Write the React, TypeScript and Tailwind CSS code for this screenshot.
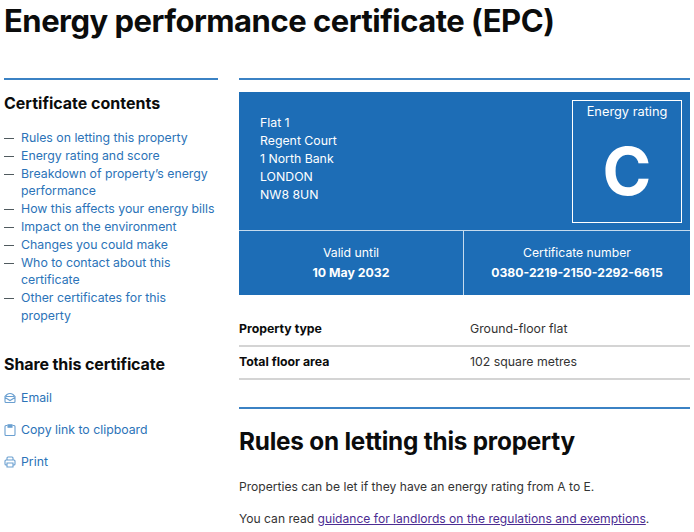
import React from "react";

const F = { fontFamily: 'Inter, sans-serif' };
const items = [
  ["Rules on letting this property"],
  ["Energy rating and score"],
  ["Breakdown of property’s energy", "performance"],
  ["How this affects your energy bills"],
  ["Impact on the environment"],
  ["Changes you could make"],
  ["Who to contact about this", "certificate"],
  ["Other certificates for this", "property"],
];

function Row({ k, v }: { k: string; v: string }) {
  return (
    <div className="flex h-[33px] items-center border-b-2 border-[#d4d4d4] text-[12.300px] text-[#0b0c0c]">
      <div className="w-[231px] font-bold">{k}</div>
      <div className="text-[#333]">{v}</div>
    </div>
  );
}

export default function App() {
  return (
    <div className="h-[532px] w-[694px] overflow-hidden bg-white" style={F}>
      <h1 className="pl-[4px] pt-[1px] text-[31px] font-bold leading-[40px] tracking-[-0.500px] text-[#0b0c0c]">
        Energy performance certificate (EPC)
      </h1>
      <div className="mt-[37px] flex">
        <aside className="ml-[4px] w-[214px]">
          <div className="h-[2px] bg-[#3b82c4]" />
          <h2 className="mt-[12px] text-[16px] font-bold leading-[22px] text-[#0b0c0c]">Certificate contents</h2>
          <ul className="mt-[15px]">
            {items.map((lines) => (
              <li key={lines[0]} className="flex text-[12.300px] leading-[17.800px] text-[#2b73b8]">
                <span className="mr-[7px] mt-[9px] h-px w-[10px] shrink-0 bg-[#505a5f]" />
                <span>
                  {lines.map((l) => (
                    <div key={l}>{l}</div>
                  ))}
                </span>
              </li>
            ))}
          </ul>
          <h2 className="mt-[28px] text-[16px] font-bold leading-[22px] tracking-[-0.100px] text-[#0b0c0c]">Share this certificate</h2>
          <div className="mt-[14px] flex flex-col gap-[14px] text-[12.300px] leading-[18px] text-[#2b73b8]">
            <div className="flex items-center gap-[5px]">
              <svg width="12" height="12" viewBox="0 0 12 12" fill="none" stroke="#6a9fd0" strokeWidth="1.100">
                <path d="M1 4.500 3 2.500 Q6 .5 9 2.500L11 4.500v5q0 1-1 1H2q-1 0-1-1zM1 5.500l5 3 5-3M2 4.500h8" />
              </svg>
              Email
            </div>
            <div className="flex items-center gap-[5px]">
              <svg width="12" height="12" viewBox="0 0 12 12" fill="none" stroke="#6a9fd0" strokeWidth="1.100">
                <path d="M3.500 1.500H2q-1 0-1 1v8q0 1 1 1h8q1 0 1-1v-8q0-1-1-1H8.500" />
                <path d="M4 .8h4v2.400H4z" fill="#6a9fd0" />
              </svg>
              Copy link to clipboard
            </div>
            <div className="flex items-center gap-[5px]">
              <svg width="12" height="12" viewBox="0 0 12 12" fill="none" stroke="#6a9fd0" strokeWidth="1.100">
                <path d="M3 4V2q0-1 1-1h4q1 0 1 1v2M3 9H2q-1 0-1-1V5q0-1 1-1h8q1 0 1 1v3q0 1-1 1H9M3 7h6v4H3z" />
              </svg>
              Print
            </div>
          </div>
        </aside>
        <main className="ml-[21px] w-[451px]">
          <div className="h-[2px] bg-[#3b82c4]" />
          <div className="mt-[12px] h-[203px] bg-[#1d6db6] text-white">
            <div className="flex h-[139px] justify-between border-b border-[#c5dbee] pt-[8px]">
              <div className="pl-[21px] pt-[14px] text-[12.300px] leading-[18px]">
                <div>Flat 1</div>
                <div>Regent Court</div>
                <div>1 North Bank</div>
                <div>LONDON</div>
                <div>NW8 8UN</div>
              </div>
              <div className="mr-[8px] flex h-[123px] w-[110px] flex-col items-center border border-white">
                <div className="pt-[2px] text-[12.800px] leading-[18px]">Energy rating</div>
                <div className="mt-[14px] text-[66px] font-bold leading-[72px]">C</div>
              </div>
            </div>
            <div className="flex h-[64px]">
              <div className="flex w-[225px] flex-col items-center justify-center border-r border-[#c5dbee] text-[12.300px] leading-[20px]">
                <div>Valid until</div>
                <div className="font-bold">10 May 2032</div>
              </div>
              <div className="flex flex-1 flex-col items-center justify-center text-[12.200px] leading-[20px]">
                <div>Certificate number</div>
                <div className="font-bold">0380-2219-2150-2292-6615</div>
              </div>
            </div>
          </div>
          <div className="mt-[19px]">
            <Row k="Property type" v="Ground-floor flat" />
            <Row k="Total floor area" v="102 square metres" />
          </div>
          <div className="mt-[27px] h-[2px] bg-[#3b82c4]" />
          <h2 className="mt-[16px] text-[24.300px] font-bold leading-[32px] tracking-[-0.200px] text-[#0b0c0c]">Rules on letting this property</h2>
          <p className="mt-[21px] text-[12.100px] leading-[18px] text-[#333]">
            Properties can be let if they have an energy rating from A to E.
          </p>
          <p className="mt-[14px] text-[12.100px] leading-[18px] text-[#333]">
            You can read <span className="text-[#4c2c92] underline">guidance for landlords on the regulations and exemptions</span>.
          </p>
        </main>
      </div>
    </div>
  );
}
